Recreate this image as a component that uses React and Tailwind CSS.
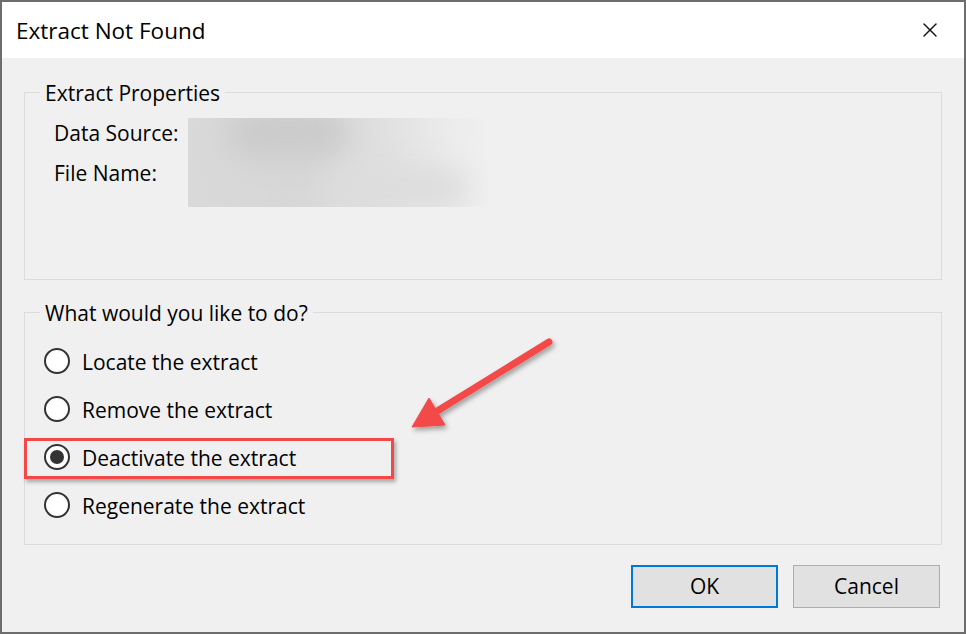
import { X } from 'lucide-react';

const options = [
  'Locate the extract',
  'Remove the extract',
  'Deactivate the extract',
  'Regenerate the extract',
];

const Radio = ({ checked }) => (
  <svg width="28" height="28" viewBox="0 0 28 28" className="shrink-0">
    <circle cx="14" cy="14" r="12" fill="#fff" stroke="#333" strokeWidth="2" />
    {checked && <circle cx="14" cy="14" r="7" fill="#333" />}
  </svg>
);

const App = () => {
  const selected = 2;

  return (
    <div
      className="relative w-[966px] h-[634px] border-2 border-[#6d6d6d] bg-[#f0f0f0] text-black overflow-hidden"
      style={{ fontFamily: '"Open Sans", "Noto Sans", sans-serif' }}
    >
      {/* title bar */}
      <div className="h-[56px] bg-white flex items-center justify-between pl-[14px] pr-[22px]">
        <span className="text-[22.5px] leading-none pt-[2px]">Extract Not Found</span>
        <X size={24} strokeWidth={1.4} className="text-[#111]" />
      </div>

      <div className="px-[22px] pt-[19px]">
        {/* extract properties */}
        <fieldset className="border border-[#dcdcdc] h-[203px]">
          <legend className="ml-[15px] px-[5px] text-[21px] leading-[28px] pt-[2px]">Extract Properties</legend>
          <div className="flex pt-[11px]">
            <div className="w-[163px] pl-[29px] flex flex-col gap-[12px] text-[21px] leading-[28px] pt-[1px]">
              <span>Data Source:</span>
              <span>File Name:</span>
            </div>
            <div className="relative w-[300px] h-[89px] overflow-hidden bg-[linear-gradient(90deg,#d9d9d9_0%,#d7d7d7_35%,#e0e0e0_65%,#ececec_88%,#f0f0f0_100%)]">
              <div className="absolute left-[40px] top-[-10px] w-[120px] h-[50px] rounded-full bg-[#cbcbcb] blur-[14px]" />
              <div className="absolute left-[140px] top-[50px] w-[140px] h-[40px] rounded-full bg-[#dcdcdc] blur-[14px]" />
            </div>
          </div>
        </fieldset>

        {/* actions */}
        <fieldset className="mt-[17px] border border-[#dcdcdc] h-[248px]">
          <legend className="ml-[15px] px-[5px] text-[21px] leading-[28px] pt-[2px]">What would you like to do?</legend>
          <div className="pt-[10px] pl-[18px] flex flex-col">
            {options.map((label, i) => (
              <div key={label} className="relative h-[48px] flex items-center gap-[11px] text-[21px]">
                <Radio checked={i === selected} />
                <span className="pt-[3px]">{label}</span>
                {i === selected && (
                  <div className="absolute left-[-19px] top-[5px] w-[370px] h-[41px] border-[3px] border-[#f24848] shadow-[2px_3px_4px_rgba(0,0,0,0.3)]" />
                )}
              </div>
            ))}
          </div>
        </fieldset>

        {/* buttons */}
        <div className="mt-[20px] flex justify-end gap-[15px] pr-[2px]">
          <button className="w-[147px] h-[43px] border-2 border-[#0078d7] bg-[#e1e1e1] text-[21px]">OK</button>
          <button className="w-[147px] h-[43px] border border-[#adadad] bg-[#e1e1e1] text-[21px]">Cancel</button>
        </div>
      </div>

      {/* annotation arrow */}
      <svg className="absolute left-[-2px] top-[-2px] pointer-events-none" width="966" height="634">
        <defs>
          <filter id="sh" x="-20%" y="-20%" width="140%" height="140%">
            <feDropShadow dx="2" dy="3" stdDeviation="2.5" floodColor="#000" floodOpacity="0.35" />
          </filter>
        </defs>
        <g filter="url(#sh)" fill="#f44848" stroke="#f44848">
          <line x1="549" y1="342" x2="434" y2="413" strokeWidth="7" strokeLinecap="round" />
          <polygon points="412,427 429,398 445,425" strokeWidth="1" />
        </g>
      </svg>
    </div>
  );
};

export default App;
